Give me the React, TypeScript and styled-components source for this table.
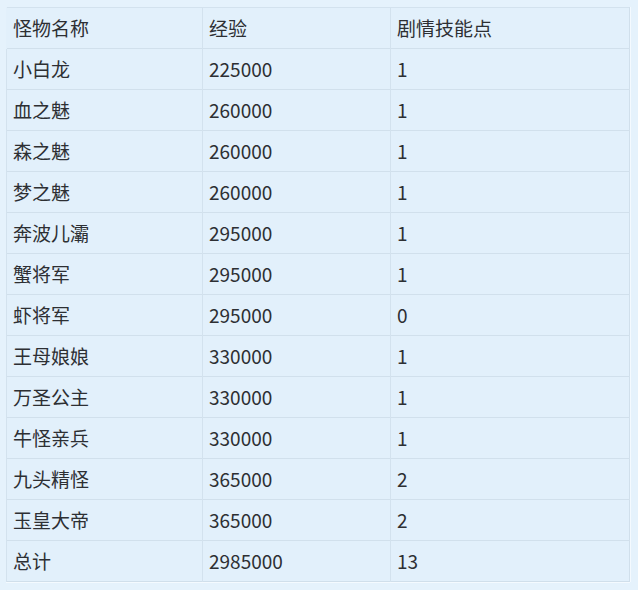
import React from "react";
import styled, { createGlobalStyle } from "styled-components";

const GlobalStyle = createGlobalStyle`
    html, body {
        margin: 0;
        padding: 0;
        background: #e5f2fc;
    }
    body {
        font-family: "Noto Sans CJK SC", "Noto Sans", sans-serif;
        color: #2d2f33;
    }
`;

const rows: [string, string, string][] = [
    ["小白龙", "225000", "1"],
    ["血之魅", "260000", "1"],
    ["森之魅", "260000", "1"],
    ["梦之魅", "260000", "1"],
    ["奔波儿灞", "295000", "1"],
    ["蟹将军", "295000", "1"],
    ["虾将军", "295000", "0"],
    ["王母娘娘", "330000", "1"],
    ["万圣公主", "330000", "1"],
    ["牛怪亲兵", "330000", "1"],
    ["九头精怪", "365000", "2"],
    ["玉皇大帝", "365000", "2"],
    ["总计", "2985000", "13"],
];

const App: React.FC = () => {
    return (
        <>
            <GlobalStyle />
            <Page>
                <Table>
                    <colgroup>
                        <col style={{ width: 196 }} />
                        <col style={{ width: 188 }} />
                        <col style={{ width: 239 }} />
                    </colgroup>
                    <thead>
                        <HeadRow>
                            <HeadCell>怪物名称</HeadCell>
                            <HeadCell>经验</HeadCell>
                            <HeadCell>剧情技能点</HeadCell>
                        </HeadRow>
                    </thead>
                    <tbody>
                        {rows.map(([name, exp, pts]) => (
                            <Row key={name}>
                                <Cell>{name}</Cell>
                                <Cell>{exp}</Cell>
                                <Cell>{pts}</Cell>
                            </Row>
                        ))}
                    </tbody>
                </Table>
            </Page>
        </>
    );
};

export default App;

const Page = styled.div`
    width: 638px;
    height: 590px;
    padding: 7px 0 0 6px;
    box-sizing: border-box;
`;

const Table = styled.table`
    width: 623px;
    table-layout: fixed;
    border-collapse: collapse;
    background: #e2f0fb;
    border-top: 1px solid #d3e2ee;
    border-bottom: 1px solid #d0dfeb;
    border-right: 1px solid #d0dfeb;
    box-shadow: 1px 0 0 #f4faff, 0 1px 0 #f4faff;
`;

const HeadRow = styled.tr`
    height: 41px;
`;

const Row = styled.tr`
    height: 41px;
    border-top: 1px solid #d1e0ec;
`;

const Cell = styled.td`
    padding: 0 0 0 6px;
    font-size: 19px;
    line-height: 24px;
    white-space: nowrap;
    border-left: 1px solid #d3e2ee;
    vertical-align: middle;
`;

const HeadCell = styled.th`
    padding: 0 0 0 6px;
    font-size: 19px;
    font-weight: 400;
    line-height: 24px;
    text-align: left;
    white-space: nowrap;
    border-left: 1px solid #d3e2ee;
    vertical-align: middle;
    &:first-child {
        border-left-color: transparent;
    }
`;
